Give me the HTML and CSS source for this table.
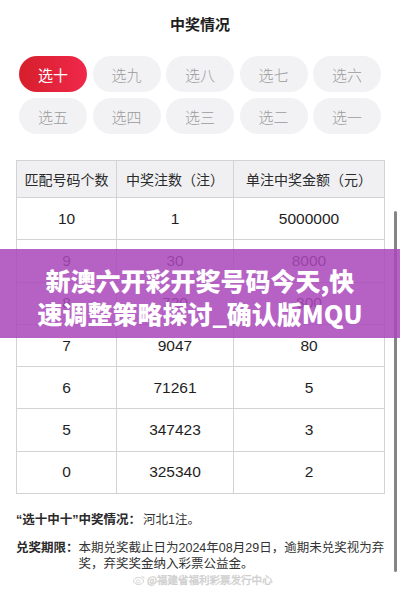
FILE: index.html
```html
<!DOCTYPE html>
<html lang="zh-CN">
<head>
<meta charset="utf-8">
<title>中奖情况</title>
<link rel="stylesheet" href="styles.css">
</head>
<body>
<div class="page">
  <div class="title">中奖情况</div>
  <div class="pills">
    <div class="pill active">选十</div>
    <div class="pill">选九</div>
    <div class="pill">选八</div>
    <div class="pill">选七</div>
    <div class="pill">选六</div>
    <div class="pill">选五</div>
    <div class="pill">选四</div>
    <div class="pill">选三</div>
    <div class="pill">选二</div>
    <div class="pill">选一</div>
  </div>
  <table class="prize">
    <colgroup><col class="c1"><col class="c2"><col class="c3"></colgroup>
    <thead>
      <tr><th>匹配号码个数</th><th>中奖注数（注）</th><th>单注中奖金额（元）</th></tr>
    </thead>
    <tbody>
      <tr><td>10</td><td>1</td><td>5000000</td></tr>
      <tr><td>9</td><td>30</td><td>8000</td></tr>
      <tr><td>8</td><td>720</td><td>800</td></tr>
      <tr><td>7</td><td>9047</td><td>80</td></tr>
      <tr><td>6</td><td>71261</td><td>5</td></tr>
      <tr><td>5</td><td>347423</td><td>3</td></tr>
      <tr><td>0</td><td>325340</td><td>2</td></tr>
    </tbody>
  </table>
  <div class="note1"><span class="lbl">“选十中十”中奖情况：</span><span class="val">河北1注。</span></div>
  <div class="note2">
    <div class="lbl lbl-fixed">兑奖期限：</div>
    <div class="val body">本期兑奖截止日为2024年08月29日，逾期未兑奖视为弃奖，弃奖奖金纳入彩票公益金。</div>
  </div>
</div>
<div class="scrollbar"></div>
<div class="banner"><div class="banner-text">新澳六开彩开奖号码今天,快<br>速调整策略探讨_确认版MQU</div></div>
<div class="watermark">
  <svg class="wb" width="12" height="10" viewBox="0 0 12 10"><ellipse cx="5.5" cy="6" rx="5" ry="3.5" fill="none" stroke="#d2d2d2" stroke-width="1"/><ellipse cx="5" cy="6.5" rx="2" ry="1.5" fill="none" stroke="#d2d2d2" stroke-width="0.8"/><path d="M8.5 1.2 A3 3 0 0 1 11.3 4" fill="none" stroke="#d2d2d2" stroke-width="0.9"/></svg>
  <span>@福建省福利彩票发行中心</span>
</div>
</body>
</html>
```
FILE: styles.css
```css
html, body {
  margin: 0;
  padding: 0;
}
body {
  width: 400px;
  height: 589px;
  overflow: hidden;
  position: relative;
  background: #fff;
  font-family: "Liberation Sans", "Noto Sans CJK SC", sans-serif;
  color: #222;
}
.page {
  display: flex;
  flex-direction: column;
}
.title {
  height: 48px;
  line-height: 48px;
  text-align: center;
  font-size: 15px;
  font-weight: 700;
  color: #1e1e1e;
  font-family: "Noto Sans CJK SC", sans-serif;
}
.pills {
  display: grid;
  grid-template-columns: repeat(5, 68px);
  column-gap: 5.5px;
  row-gap: 6px;
  padding-left: 19px;
  margin-top: 8px;
}
.pill {
  height: 36px;
  border-radius: 18px;
  background: #f2f2f4;
  display: flex;
  align-items: center;
  justify-content: center;
  font-family: "Noto Sans CJK SC", sans-serif;
  font-size: 15px;
  color: #9b9b9b;
  font-weight: 300;
}
.pill.active {
  background: linear-gradient(90deg, #d61f2b, #f0284b);
  color: #fff;
  font-weight: 400;
}
.prize {
  margin-top: 26px;
  margin-left: 16px;
  width: 368px;
  border-collapse: collapse;
  table-layout: fixed;
}
.c1 { width: 100px; }
.c2 { width: 117px; }
.c3 { width: 151px; }
.prize th, .prize td {
  border: 1.5px solid #d3d3d5;
  text-align: center;
  padding: 0;
}
.prize th {
  height: 36px;
  background: #f0f0f3;
  font-family: "Noto Sans CJK SC", sans-serif;
  font-weight: 400;
  font-size: 14px;
  color: #2a2a2a;
}
.prize td {
  height: 41.3px;
  font-size: 15.5px;
  color: #1e1e1e;
}
.note1 {
  margin-top: 17px;
  margin-left: 16px;
  line-height: 18px;
  font-size: 12.5px;
}
.lbl {
  font-weight: 700;
  color: #2a2a2a;
}
.val {
  color: #333;
  font-weight: 400;
}
.note1 .val {
  margin-left: 2px;
}
.note2 {
  margin-top: 11px;
  margin-left: 16px;
  display: flex;
  font-size: 12.5px;
  line-height: 16px;
}
.lbl-fixed {
  flex: 0 0 61px;
  white-space: nowrap;
}
.body {
  width: 312px;
  letter-spacing: 0;
}
.scrollbar {
  position: absolute;
  left: 394px;
  top: 211px;
  width: 3px;
  height: 361px;
  border-radius: 1.5px;
  background: #858585;
}
.banner {
  position: absolute;
  left: 0;
  top: 249px;
  width: 400px;
  height: 89px;
  background: rgba(170, 72, 186, 0.86);
  display: flex;
  align-items: center;
  justify-content: center;
  padding-top: 6px;
  box-sizing: border-box;
}
.banner-text {
  color: #fff;
  font-family: "Noto Sans CJK SC", sans-serif;
  font-weight: 900;
  font-size: 25px;
  line-height: 33px;
  text-align: center;
  white-space: nowrap;
}
.watermark {
  position: absolute;
  left: 133px;
  top: 573px;
  display: flex;
  align-items: center;
  gap: 2px;
  font-family: "Noto Sans CJK SC", sans-serif;
  font-size: 10.5px;
  line-height: 14px;
  color: #e4e4e4;
  -webkit-text-stroke: 0.4px #c8c8c8;
}
.wb {
  display: block;
}
```
